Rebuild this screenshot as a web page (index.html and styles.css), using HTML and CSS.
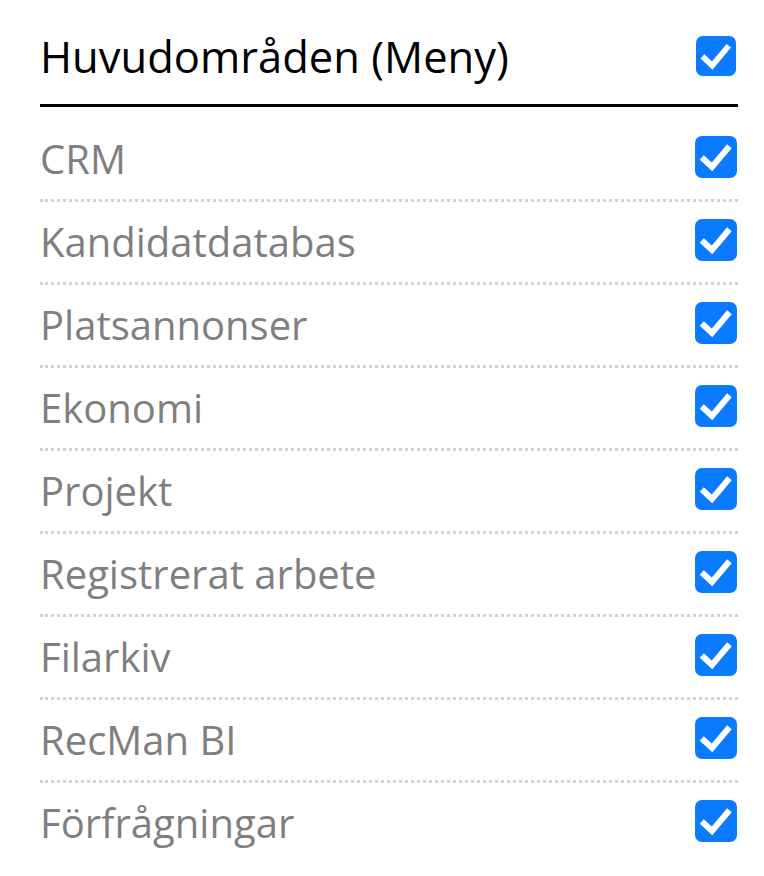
FILE: index.html
```html
<!DOCTYPE html>
<html lang="sv">
<head>
<meta charset="utf-8">
<link rel="stylesheet" href="styles.css">
</head>
<body>
<div class="panel">
  <div class="header">
    <span class="title">Huvudområden (Meny)</span>
    <svg class="cb cb-head" viewBox="0 0 42 42"><rect width="42" height="42" rx="7"/><path d="M9 23.5 L17 31 L32.5 12.5"/></svg>
  </div>
  <ul class="list">
    <li class="row"><span class="label">CRM</span><svg class="cb" viewBox="0 0 42 42"><rect width="42" height="42" rx="7"/><path d="M9 23.5 L17 31 L32.5 12.5"/></svg></li>
    <li class="row"><span class="label">Kandidatdatabas</span><svg class="cb" viewBox="0 0 42 42"><rect width="42" height="42" rx="7"/><path d="M9 23.5 L17 31 L32.5 12.5"/></svg></li>
    <li class="row"><span class="label">Platsannonser</span><svg class="cb" viewBox="0 0 42 42"><rect width="42" height="42" rx="7"/><path d="M9 23.5 L17 31 L32.5 12.5"/></svg></li>
    <li class="row"><span class="label">Ekonomi</span><svg class="cb" viewBox="0 0 42 42"><rect width="42" height="42" rx="7"/><path d="M9 23.5 L17 31 L32.5 12.5"/></svg></li>
    <li class="row"><span class="label">Projekt</span><svg class="cb" viewBox="0 0 42 42"><rect width="42" height="42" rx="7"/><path d="M9 23.5 L17 31 L32.5 12.5"/></svg></li>
    <li class="row"><span class="label">Registrerat arbete</span><svg class="cb" viewBox="0 0 42 42"><rect width="42" height="42" rx="7"/><path d="M9 23.5 L17 31 L32.5 12.5"/></svg></li>
    <li class="row"><span class="label">Filarkiv</span><svg class="cb" viewBox="0 0 42 42"><rect width="42" height="42" rx="7"/><path d="M9 23.5 L17 31 L32.5 12.5"/></svg></li>
    <li class="row"><span class="label">RecMan BI</span><svg class="cb" viewBox="0 0 42 42"><rect width="42" height="42" rx="7"/><path d="M9 23.5 L17 31 L32.5 12.5"/></svg></li>
    <li class="row last"><span class="label">Förfrågningar</span><svg class="cb" viewBox="0 0 42 42"><rect width="42" height="42" rx="7"/><path d="M9 23.5 L17 31 L32.5 12.5"/></svg></li>
  </ul>
</div>
</body>
</html>
```
FILE: styles.css
```css
html, body {
  margin: 0;
  padding: 0;
  background: #ffffff;
}
body {
  font-family: "Open Sans", "Noto Sans", sans-serif;
}
.panel {
  padding: 0 26px 0 40px;
}
.header {
  display: flex;
  align-items: center;
  justify-content: space-between;
  height: 94px;
  padding-top: 10px;
  border-bottom: 3px solid #000;
  box-sizing: content-box;
}
.title {
  font-size: 43.5px;
  color: #000;
  line-height: 1;
}
.list {
  list-style: none;
  margin: 12px 0 0 0;
  padding: 0;
}
.row {
  display: flex;
  align-items: center;
  justify-content: space-between;
  height: 80px;
  border-bottom: 3px dotted #d2d2d2;
}
.row.last {
  border-bottom: none;
}
.label {
  font-size: 40px;
  color: #7f7f7f;
  line-height: 1;
}
.cb {
  width: 42px;
  height: 42px;
  flex: none;
  margin-right: 1px;
  margin-bottom: 5px;
}
.cb-head {
  width: 40px;
  height: 40px;
  margin-right: 2px;
  margin-bottom: 2px;
}
.cb rect {
  fill: #0a7aff;
}
.cb path {
  fill: none;
  stroke: #ffffff;
  stroke-width: 6;
  stroke-linecap: square;
  stroke-linejoin: miter;
}
```
